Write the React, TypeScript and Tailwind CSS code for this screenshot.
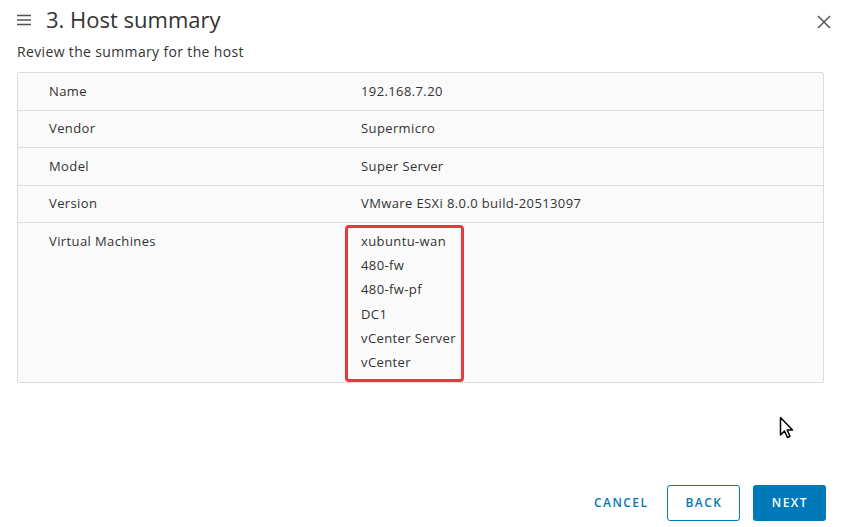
import React from "react";

const rows: [string, string][] = [
  ["Name", "192.168.7.20"],
  ["Vendor", "Supermicro"],
  ["Model", "Super Server"],
  ["Version", "VMware ESXi 8.0.0 build-20513097"],
];

const vms = ["xubuntu-wan", "480-fw", "480-fw-pf", "DC1", "vCenter Server", "vCenter"];

export default function App() {
  return (
    <div
      className="relative w-[841px] h-[527px] bg-white text-[#333] overflow-hidden"
      style={{ fontFamily: "'Open Sans', Lato, sans-serif" }}
    >
      <div className="flex items-center h-[38px] pl-[17px] pr-[10px]">
        <svg width="14" height="12" viewBox="0 0 14 12" className="mr-[15px] mt-[1px]">
          <path d="M0 1.5H14M0 6H14M0 10.5H14" stroke="#555" strokeWidth="1.4" />
        </svg>
        <div className="text-[22px] leading-none text-[#333] font-normal">3. Host summary</div>
        <svg width="14" height="14" viewBox="0 0 14 14" className="ml-auto mr-0 mt-[6px]">
          <path d="M1 1L13 13M13 1L1 13" stroke="#555" strokeWidth="1.5" />
        </svg>
      </div>
      <div className="pl-[17px] text-[14px] leading-[28px] tracking-[0.025em] text-[#333]">Review the summary for the host</div>
      <div className="mx-[17px] mt-[6px] w-[807px] border border-[#dcdcdc] bg-[#fafafa] rounded-[2px]">
        {rows.map(([k, v]) => (
          <div key={k} className="flex items-center h-[37.5px] border-b border-[#dcdcdc] text-[13px] tracking-[0.03em]">
            <div className="w-[343px] pl-[31px]">{k}</div>
            <div>{v}</div>
          </div>
        ))}
        <div className="flex text-[13px] tracking-[0.03em] h-[159px]">
          <div className="w-[343px] pl-[31px] pt-[9px]">Virtual Machines</div>
          <div className="ml-[-16px] mt-[2px] w-[119px] h-[157px] border-[3px] border-[#e8383d] rounded-[4px] pl-[13px] pt-[1px]">
            {vms.map((v) => (
              <div key={v} className="h-[24.2px] leading-[24px] whitespace-nowrap">{v}</div>
            ))}
          </div>
        </div>
      </div>
      <div className="absolute left-[588px] top-[485px] flex items-center gap-[13px]">
        <button className="h-[36px] px-[6px] text-[12px] font-semibold tracking-[0.12em] text-[#0079b8]">CANCEL</button>
        <button className="h-[36px] w-[73px] border border-[#0079b8] rounded-[3px] text-[12px] font-semibold tracking-[0.12em] text-[#0079b8] bg-white">BACK</button>
        <button className="h-[36px] w-[73px] rounded-[3px] text-[12px] font-semibold tracking-[0.12em] text-white bg-[#0079b8]">NEXT</button>
      </div>
      <svg width="18" height="24" viewBox="0 0 18 24" className="absolute left-[779px] top-[416px]">
        <path d="M1.5 1.5V19L5.5 15L8.5 21.5L11 20.3L8.2 14H13.5Z" fill="white" stroke="black" strokeWidth="1.5" strokeLinejoin="round" />
      </svg>
    </div>
  );
}
